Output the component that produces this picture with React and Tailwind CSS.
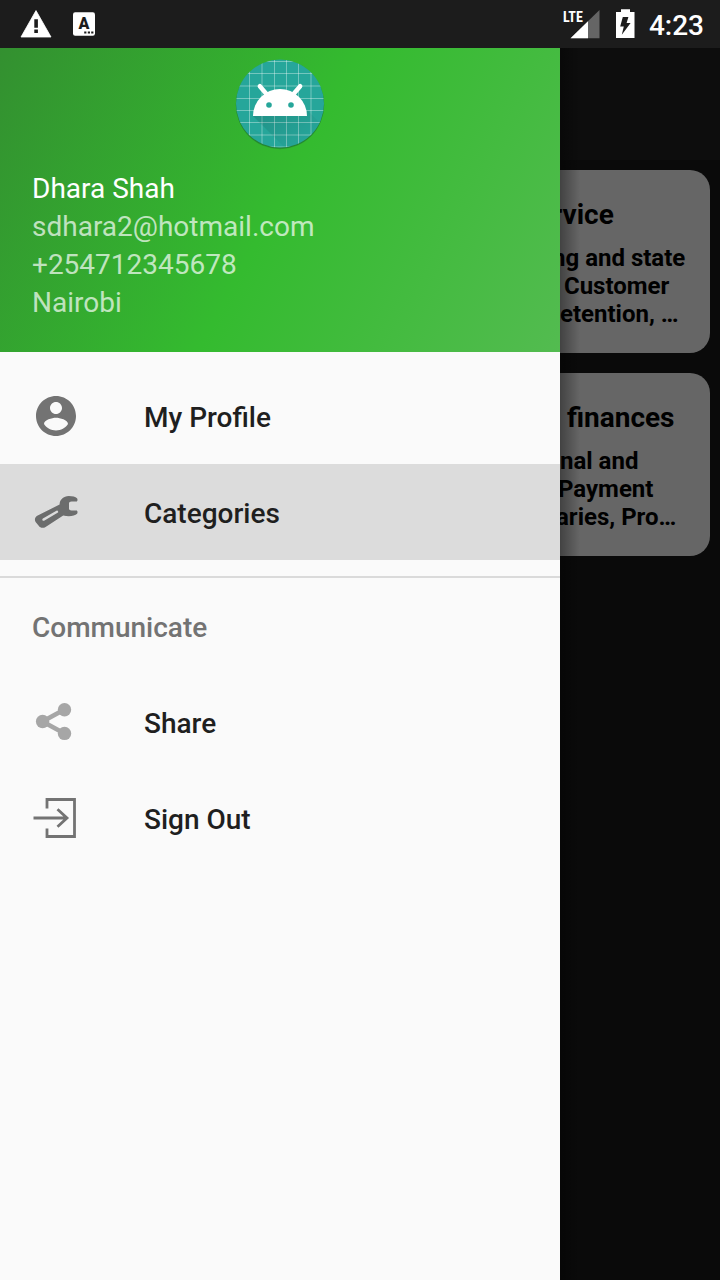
const cards = [
  {
    title: { text: 'rvice', overhang: '-ml-2' },
    lines: [
      { text: 'ng and state', overhang: '-ml-2' },
      { text: ' Customer', overhang: '-ml-0.5' },
      { text: 'etention, …', overhang: '' },
    ],
  },
  {
    title: { text: ' finances', overhang: '' },
    lines: [
      { text: 'nal and', overhang: '' },
      { text: 'Payment', overhang: '-ml-0.5' },
      { text: 'aries, Pro…', overhang: '-ml-1' },
    ],
  },
];

function WarningIcon() {
  return (
    <svg className="h-8 w-8" viewBox="0 0 32 32" aria-hidden="true">
      <path d="M16 2.600 31 29H1Z" fill="#fff" stroke="#fff" strokeWidth="0.8" strokeLinejoin="round" />
      <path d="M14.3 11.3h3.6v8.400h-3.6zM14.3 21.600h3.6v3.400h-3.6z" fill="#1c1c1c" />
    </svg>
  );
}

function KeyboardBadge() {
  return (
    <svg className="h-6 w-6" viewBox="0 0 24 24" aria-hidden="true">
      <rect x="1" y="0.3" width="22" height="23.4" rx="2.2" fill="#fff" />
      <text x="12" y="17" textAnchor="middle" fontFamily="Roboto, sans-serif" fontWeight="900" fontSize="16" fill="#1c1c1c">A</text>
      <path d="M12.2 19.6h2.2v2h-2.2zM15.8 19.6H18v2h-2.2zM19.2 19.6h2.2v2h-2.2z" fill="#1c1c1c" />
    </svg>
  );
}

function SignalIcon() {
  return (
    <svg className="h-8 w-10" viewBox="0 0 40 32" aria-hidden="true">
      <path d="M9.500 30.200 38.500 2v28.200Z" fill="#656565" />
      <path d="M9.500 30.200 27 13.200v17Z" fill="#fff" />
      <text x="2" y="14" fontFamily="'Roboto Condensed', Roboto, sans-serif" fontWeight="700" fontSize="14" fill="#fff">LTE</text>
    </svg>
  );
}

function BatteryIcon() {
  return (
    <svg className="h-8 w-5" viewBox="0 0 20 32" aria-hidden="true">
      <path d="M1 4h5V1.200h9V4h4.500v26H1Z" fill="#fff" />
      <path d="M7.800 9h5.600l-1.800 6h4L6.800 26.800l2-8.400H5.200Z" fill="#1c1c1c" />
    </svg>
  );
}

function AppLogo() {
  const xs = [17.5, 30, 42.5, 54.5, 66.5, 79];
  const ys = [5.5, 17.5, 30, 42.5, 54.5, 66.5, 79, 91];
  return (
    <svg className="mx-auto h-24 w-24" viewBox="0 0 96 96" role="img" aria-label="App logo">
      <defs>
        <clipPath id="disc"><circle cx="48" cy="47.6" r="44" /></clipPath>
        <linearGradient id="cast" x1="40" y1="50" x2="68" y2="88" gradientUnits="userSpaceOnUse">
          <stop offset="0" stopColor="#000" stopOpacity="0.12" />
          <stop offset="1" stopColor="#000" stopOpacity="0.01" />
        </linearGradient>
      </defs>
      <circle cx="48" cy="49.2" r="44" fill="#1d6b2a" opacity="0.35" />
      <circle cx="48" cy="48.4" r="44.2" fill="#1d6b3a" opacity="0.5" />
      <g clipPath="url(#disc)">
        <rect width="96" height="96" fill="#26a69a" />
        {xs.map((x) => <path key={x} d={`M${x} 0V96`} stroke="#fff" strokeOpacity="0.36" />)}
        {ys.map((y) => <path key={y} d={`M0 ${y}H96`} stroke="#fff" strokeOpacity="0.36" />)}
        <path d="M21 60 57 96h60L75 54V60Z" fill="url(#cast)" />
      </g>
      <path d="M27.8 30.2 34.5 38M68.2 30.2 61.5 38" stroke="#fff" strokeWidth="4.4" strokeLinecap="round" />
      <path d="M21 60a27 27 0 0 1 54 0Z" fill="#fff" />
      <circle cx="37" cy="49" r="2.8" fill="#26a69a" />
      <circle cx="59" cy="49" r="2.8" fill="#26a69a" />
    </svg>
  );
}

function ProfileIcon() {
  return (
    <svg className="h-12 w-12" viewBox="0 0 24 24" fill="#737373" aria-hidden="true">
      <path d="M12 2C6.48 2 2 6.48 2 12s4.48 10 10 10 10-4.48 10-10S17.52 2 12 2zm0 3c1.66 0 3 1.34 3 3s-1.34 3-3 3-3-1.34-3-3 1.34-3 3-3zm0 14.2c-2.5 0-4.71-1.28-6-3.22.03-1.99 4-3.08 6-3.08 1.99 0 5.97 1.09 6 3.08-1.29 1.94-3.5 3.22-6 3.22z" />
    </svg>
  );
}

function WrenchIcon() {
  return (
    <svg className="h-12 w-12" viewBox="0 0 48 48" aria-hidden="true">
      <path
        fill="#6c6d6d"
        d="M27.600 16.500C27.500 11.800 31.500 8 36.800 8c3.600 0 6.800.8 8.200 2.200.7.700.7 2.600-.1 3.200h-5.400c-1.600 0-2.500.7-2.500 2v5.200c0 1.300.9 2 2.500 2h5.400c.8.600.8 2.600.2 3.200-2.400 2.200-8.400 3.200-13.900 1.600L13.600 39c-2.300 1.400-5.400 1.200-6.900-1.200L3.600 34c-1.400-2.300-.6-4.900 1.600-6.200Z"
      />
      <path d="M11.500 31.600 25 23.800" stroke="#dcdcdc" strokeWidth="2.400" strokeLinecap="round" />
    </svg>
  );
}

function ShareIcon() {
  return (
    <svg className="h-12 w-12" viewBox="0 0 48 48" aria-hidden="true">
      <path d="M32.500 11.500 10.500 23.500l22 12" fill="none" stroke="#a6a6a6" strokeWidth="4.600" />
      <circle cx="32.500" cy="11.800" r="6.700" fill="#a6a6a6" />
      <circle cx="10.600" cy="23.500" r="6.700" fill="#a6a6a6" />
      <circle cx="32.500" cy="35.400" r="6.700" fill="#a6a6a6" />
    </svg>
  );
}

function SignOutIcon() {
  return (
    <svg className="h-12 w-12" viewBox="0 0 48 48" fill="none" stroke="#737373" strokeWidth="2.800" aria-hidden="true">
      <path d="M15 14.500V5.500H42.500V42.500H15V34.500" />
      <path d="M1.500 24H35M25.500 15.200 35 24l-9.500 8.800" />
    </svg>
  );
}

function NavItem({ icon, label, active }) {
  return (
    <a
      href="#"
      aria-current={active ? 'page' : undefined}
      className={`flex h-24 items-center gap-16 px-8 text-[28px] font-medium text-[#1f1f1f] ${active ? 'bg-[#dcdcdc]' : ''}`}
    >
      {icon}
      <span className="pt-1">{label}</span>
    </a>
  );
}

export default function App() {
  return (
    <div className="flex min-h-screen flex-col bg-[#0a0a0a] font-['Roboto',sans-serif]">
      <header className="flex h-12 items-center justify-between bg-[#1c1c1c] pr-4 pl-5 text-white">
        <div className="flex items-center gap-5">
          <WarningIcon />
          <KeyboardBadge />
        </div>
        <div className="flex items-center gap-3.5">
          <SignalIcon />
          <BatteryIcon />
          <time className="pt-1 text-[28px] leading-8 font-medium">4:23</time>
        </div>
      </header>

      <div className="flex flex-1">
        <aside className="flex w-[560px] shrink-0 flex-col bg-[#fafafa]">
          <div className="bg-[linear-gradient(118.5deg,#339030_0%,#34bb2f_50%,#53bb50_100%)] px-8 pt-2 pb-[30px]">
            <AppLogo />
            <div className="mt-[18px] text-[28px] leading-[38px] text-white/70">
              <p className="text-white">Dhara Shah</p>
              <p>sdhara2@hotmail.com</p>
              <p>+254712345678</p>
              <p>Nairobi</p>
            </div>
          </div>
          <nav className="pt-4">
            <NavItem icon={<ProfileIcon />} label="My Profile" />
            <NavItem icon={<WrenchIcon />} label="Categories" active />
            <div className="mt-4 border-t-2 border-[#dadada]">
              <h2 className="flex h-24 items-center px-8 pt-1 text-[28px] font-medium text-[#737373]">Communicate</h2>
              <NavItem icon={<ShareIcon />} label="Share" />
              <NavItem icon={<SignOutIcon />} label="Sign Out" />
            </div>
          </nav>
        </aside>

        <main className="relative min-w-0 flex-1 overflow-hidden">
          <div className="h-28 bg-[#0d0d0d]" />
          <div className="flex flex-col gap-5 pt-2.5 pr-2.5">
            {cards.map((card) => (
              <article key={card.title.text} className="rounded-r-[20px] bg-[#666] pt-[29px] pb-[25px] font-bold whitespace-pre text-black">
                <h3 className={`text-[28px] leading-8 ${card.title.overhang}`}>{card.title.text}</h3>
                <div className="mt-[13px] text-2xl leading-7">
                  {card.lines.map((line) => <p key={line.text} className={line.overhang}>{line.text}</p>)}
                </div>
              </article>
            ))}
          </div>
          <div className="absolute inset-y-0 left-0 w-5 bg-linear-to-r from-black/35 to-transparent" />
        </main>
      </div>
    </div>
  );
}
